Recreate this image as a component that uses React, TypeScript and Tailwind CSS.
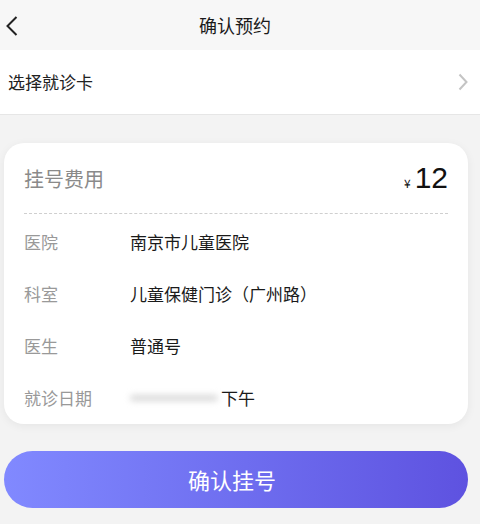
const font = "font-['Noto_Sans_CJK_SC','Noto_Sans',sans-serif]";

const rows = [
  { label: "医院", value: "南京市儿童医院" },
  { label: "科室", value: "儿童保健门诊（广州路）" },
  { label: "医生", value: "普通号" },
];

export default function App() {
  return (
    <div className={`${font} flex h-[524px] w-[480px] flex-col overflow-hidden bg-[#f3f3f3]`}>
      {/* header */}
      <div className="relative flex h-[50px] items-center justify-center bg-[#f7f7f7] pr-[10px]">
        <svg
          className="absolute left-[5px] top-[15px]"
          width="14"
          height="22"
          viewBox="0 0 14 22"
          fill="none"
          stroke="#222"
          strokeWidth="2"
        >
          <path d="M11.5 2 L2.5 11 L11.5 20" />
        </svg>
        <span className="text-[18px] text-[#1a1a1a]">确认预约</span>
      </div>

      {/* card picker */}
      <div className="flex h-[65px] items-center justify-between border-b border-[#e6e6e6] bg-white pl-2 pr-3">
        <span className="text-[17px] text-[#222]">选择就诊卡</span>
        <svg width="10" height="18" viewBox="0 0 10 18" fill="none" stroke="#c4c4c4" strokeWidth="2">
          <path d="M1.5 1.5 L8.5 9 L1.5 16.5" />
        </svg>
      </div>

      {/* info card */}
      <div className="mx-1 mt-[28px] w-[464px] rounded-[20px] bg-white px-5 shadow-[0_2px_10px_rgba(0,0,0,0.06)]">
        <div className="flex h-[71px] items-center justify-between border-b border-dashed border-[#cfcfcf]">
          <span className="pt-[2px] text-[20px] text-[#8a8a8a]">挂号费用</span>
          <span className="flex items-baseline text-[#111]">
            <span className="mr-[4px] text-[12px]">¥</span>
            <span className="font-['Liberation_Sans',sans-serif] text-[30px] leading-none">12</span>
          </span>
        </div>
        <div className="flex flex-col pt-[2px]">
          {rows.map((r) => (
            <div key={r.label} className="flex h-[52px] items-center text-[17px]">
              <span className="w-[106px] text-[#999]">{r.label}</span>
              <span className="text-[#1a1a1a]">{r.value}</span>
            </div>
          ))}
          <div className="flex h-[52px] items-center text-[17px]">
            <span className="w-[106px] text-[#999]">就诊日期</span>
            <span className="h-[6px] w-[88px] rounded-full bg-[#d8d8d8] blur-[3px]" />
            <span className="ml-[3px] text-[#1a1a1a]">下午</span>
          </div>
        </div>
      </div>

      {/* submit */}
      <button
        type="button"
        className="mx-1 mt-[27px] flex h-[57px] w-[464px] items-center justify-center rounded-full bg-gradient-to-r from-[#8189ff] to-[#5e52e0] pr-[8px] text-[22px] text-white"
      >
        确认挂号
      </button>
    </div>
  );
}
